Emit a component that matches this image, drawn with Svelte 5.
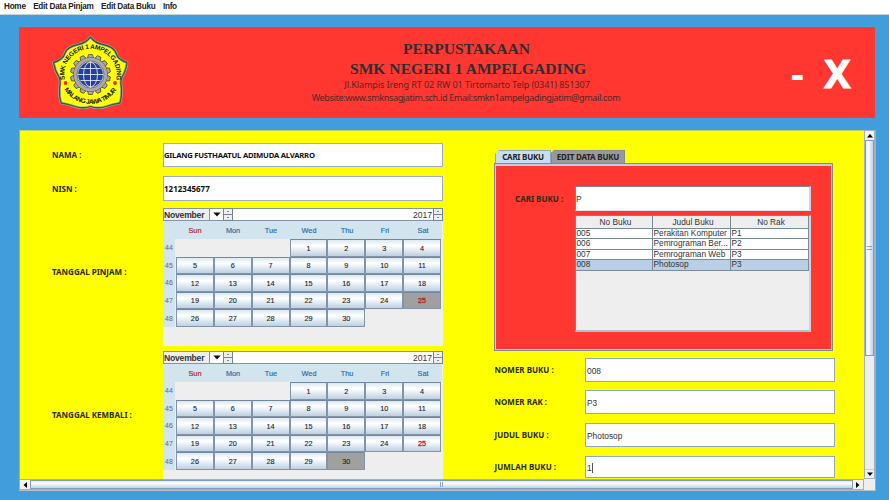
<script>
  const menu = ['Home', 'Edit Data Pinjam', 'Edit Data Buku', 'Info'];
  const days = ['Sun', 'Mon', 'Tue', 'Wed', 'Thu', 'Fri', 'Sat'];
  const weeks = [44, 45, 46, 47, 48];
  const cells = Array.from({ length: 35 }, (_, i) => (i >= 3 && i <= 32 ? i - 2 : null));
  const calendars = [
    { label: 'TANGGAL PINJAM :', selected: 25 },
    { label: 'TANGGAL KEMBALI :', selected: 30 }
  ];
  const books = [
    ['005', 'Perakitan Komputer', 'P1'],
    ['006', 'Pemrograman Ber...', 'P2'],
    ['007', 'Pemrograman Web', 'P3'],
    ['008', 'Photosop', 'P3']
  ];
  const teeth = Array.from({ length: 14 }, (_, i) => i * (360 / 14));
  const petals =
    'M45.4 7Q50 13 58 14.500Q69 17 71 23Q73 30 82 32.500Q81 41 77 47Q75 51 76.500 58Q77 66 75 73Q68 74 61 76.500Q53 79 45.400 76.500Q38 79 30 76.500Q23 74 16 73Q14 66 14.500 58Q16 51 14 47Q10 41 8.500 32.500Q18 30 20 23Q22 17 33 14.500Q41 13 45.400 7Z';
</script>

{#snippet spinner()}
  <span class="spinner"><i></i><i></i></span>
{/snippet}

{#snippet calendar(selected)}
  <div class="calendar">
    <div class="cal-top">
      <span class="month">November</span>
      <span class="drop"><svg width="8" height="5" viewBox="0 0 8 5"><path d="M0.3 0.5h7.4L4 4.6z" fill="#111" /></svg></span>
      {@render spinner()}
      <span class="year">2017</span>
      {@render spinner()}
    </div>
    <div class="cal-body">
      <div class="weeks">
        {#each weeks as w}<span>{w}</span>{/each}
      </div>
      <div class="month-grid">
        <div class="names">
          {#each days as d, i}<span class:sun={i === 0}>{d}</span>{/each}
        </div>
        <div class="cells">
          {#each cells as c}
            {#if c}
              <span class="day" class:today={c === 25} class:selected={c === selected}>{c}</span>
            {:else}
              <span></span>
            {/if}
          {/each}
        </div>
      </div>
    </div>
  </div>
{/snippet}

<div class="window">
  <nav>
    {#each menu as item}<span>{item}</span>{/each}
  </nav>

  <header>
    <svg class="logo" width="78" height="78" viewBox="7 4 78 78">
      <defs>
        <path id="arc-top" d="M21.1 54.500A26.200 26.200 0 1 1 69.900 54.500" />
        <path id="arc-bottom" d="M16.2 53A31 31 0 0 0 74.8 53" />
      </defs>
      <path d={petals} fill="#ffff08" stroke="#a5b1a0" stroke-width="2.600" stroke-linejoin="round" />
      <path d={petals} fill="none" stroke="#28603a" stroke-width="1.300" stroke-linejoin="round" />
      <g fill="#aaa9a6" stroke="#3b3926" stroke-width="0.700">
        {#each teeth as a}
          <path d="M42.300 28.500L43.600 24.500H47.400L48.700 28.500" transform="rotate({a} 45.500 44.500)" />
        {/each}
        <circle cx="45.500" cy="44.500" r="16.800" />
      </g>
      <circle cx="45.500" cy="44.500" r="16.700" fill="#aaa9a6" />
      <circle cx="45.500" cy="44.500" r="13.500" fill="#ddd" stroke="#555" stroke-width="0.700" />
      <circle cx="45.500" cy="44.500" r="12.400" fill="#23419a" />
      <g fill="none" stroke="#dce4f5" stroke-width="0.900">
        <path d="M45.500 32V57M33 44.500H58M35.500 38.500H55.500M35.500 50.500H55.500" />
        <ellipse cx="45.500" cy="44.500" rx="7" ry="12.400" />
      </g>
      <text class="ring"><textPath href="#arc-top" startOffset="5" textLength="92">SMK NEGERI 1 AMPELGADING</textPath></text>
      <text class="ring"><textPath href="#arc-bottom" startOffset="7" textLength="62">MALANG JAWA TIMUR</textPath></text>
      <circle cx="20.500" cy="53" r="1.900" fill="#f32626" />
      <circle cx="70" cy="53" r="1.900" fill="#f32626" />
    </svg>
    <div class="title">
      <h1>PERPUSTAKAAN</h1>
      <h1 class="school">SMK NEGERI 1 AMPELGADING</h1>
      <p class="address">Jl.Klampis Ireng RT 02 RW 01 Tirtomarto Telp (0341) 851307</p>
      <p class="contact">Website:www.smknsagjatim.sch.id Email:smkn1ampelgadingjatim@gmail.com</p>
    </div>
    <div class="controls"><span class="min">-</span><span class="close">X</span></div>
  </header>

  <main>
    <div class="content">
      <section class="left">
        <div class="row nama"><span class="label">NAMA :</span><div class="field bold"><span class="name">GILANG FUSTHAATUL ADIMUDA ALVARRO</span></div></div>
        <div class="row nisn"><span class="label">NISN :</span><div class="field bold"><span>1212345677</span></div></div>
        {#each calendars as c}
          <div class="row cal-row"><span class="label">{c.label}</span>{@render calendar(c.selected)}</div>
        {/each}
      </section>

      <section class="right">
        <div class="tabs">
          <span class="tab active">CARI BUKU</span>
          <span class="tab other">EDIT DATA BUKU</span>
        </div>
        <div class="panel">
          <span class="label search-label">CARI BUKU :</span>
          <div class="search">
            <div class="field query">P</div>
            <div class="table">
              <div class="tr th"><span>No Buku</span><span>Judul Buku</span><span>No Rak</span></div>
              {#each books as b, i}
                <div class="tr" class:picked={i === 3}>
                  {#each b as v}<span>{v}</span>{/each}
                </div>
              {/each}
            </div>
          </div>
        </div>
        <div class="form">
          <div class="row f1"><span class="label">NOMER BUKU :</span><div class="field">008</div></div>
          <div class="row f2"><span class="label">NOMER RAK :</span><div class="field">P3</div></div>
          <div class="row f3"><span class="label">JUDUL BUKU :</span><div class="field">Photosop</div></div>
          <div class="row f4"><span class="label">JUMLAH BUKU :</span><div class="field">1<b class="caret"></b></div></div>
        </div>
      </section>
    </div>
    <div class="vbar">
      <span class="btn"><svg width="6" height="4" viewBox="0 0 6 4"><path d="M3 0L6 3.500H0z" /></svg></span>
      <span class="thumb"><i></i></span>
      <span class="btn"><svg width="6" height="4" viewBox="0 0 6 4"><path d="M0 0.500H6L3 4z" /></svg></span>
    </div>
    <div class="hbar">
      <span class="btn"><svg width="4" height="6" viewBox="0 0 4 6"><path d="M4 0V6L0.500 3z" /></svg></span>
      <span class="thumb"><i></i></span>
      <span class="btn"><svg width="4" height="6" viewBox="0 0 4 6"><path d="M0 0V6L3.500 3z" /></svg></span>
    </div>
    <div class="corner"></div>
  </main>
</div>

<style>
  * { box-sizing: border-box; }
  :global(body) { margin: 0; }
  .window {
    width: 889px;
    height: 500px;
    overflow: hidden;
    background: #419ddb;
    font-family: "Liberation Sans", Arial, sans-serif;
    font-size: 8px;
    color: #333;
    white-space: nowrap;
  }
  nav {
    height: 15px;
    display: flex;
    gap: 7.500px;
    padding-left: 4px;
    background: #fff;
    border-bottom: 1px solid #c4d4df;
    font: bold 8.200px/14px "Liberation Sans", sans-serif;
    letter-spacing: -0.270px;
    color: #222;
  }
  header {
    margin: 12px 0 0 19px;
    width: 856px;
    height: 91px;
    display: grid;
    grid-template-columns: 278px 340px 1fr;
    background: #ff3730;
    border-bottom: 1px solid #d9443f;
  }
  .logo { margin: 7px 0 0 33px; }
  .ring { font: bold 6.500px "Liberation Sans", sans-serif; fill: #161600; }
  .title { text-align: center; color: #2e2e2e; }
  h1 { margin: 12px 0 0 -1px; font: bold 15.600px/20px "Liberation Serif", serif; }
  h1.school { margin: 0 0 0 2px; }
  p { margin: -1px 0 0; font: 9px/13px "Noto Sans", sans-serif; color: #4c2927; }
  .address { letter-spacing: -0.070px; }
  .contact { margin: 0; padding-right: 2px; letter-spacing: -0.330px; }
  .controls { display: flex; color: #fff; padding: 19px 0 0 154px; font: bold 40px/54px "Noto Sans", sans-serif; }
  .close { -webkit-text-stroke: 0.800px #fff; }
  .min { width: 33px; }
  main {
    margin: 12px 0 0 19px;
    width: 857px;
    height: 361px;
    display: grid;
    grid-template: 349px 11px / 845px 11px;
    border-bottom: 1px solid #b9bfc4;
    border-right: 1px solid #7cb8df;
  }
  .content { display: flex; overflow: hidden; background: #ff0; border-top: 1px solid #b8d06f; border-left: 1px solid #8fb77e; }
  .label, .tab { font: bold 8px/10px "Noto Sans", sans-serif; color: #2b2b10; }
  .left { width: 474px; padding: 12px 0 0 32px; flex: none; }
  .row { display: flex; align-items: center; }
  .left .row > :first-child { width: 111px; flex: none; }
  .nama { height: 24px; }
  .nisn { height: 25px; margin: 9px 0 7px; }
  .field {
    width: 280px;
    height: 100%;
    display: flex;
    align-items: center;
    background: #fff;
    border: 1px solid #9aabce;
    padding-top: 1px;
    font-size: 8.400px;
    color: #333;
  }
  .bold { font: bold 8px/10px "Noto Sans", sans-serif; color: #111; padding-top: 0; }
  .name { letter-spacing: -0.240px; font-size: 7.700px; }
  .left .cal-row { height: 137px; align-items: flex-start; margin-bottom: 6px; }
  .cal-row .label { padding-top: 59px; }
  .calendar { width: 280px; height: 138px; background: #eee; flex: none; }
  .cal-top { height: 13px; display: flex; background: #fff; border: 1px solid #8394aa; font: bold 8.600px/12px "Liberation Sans", sans-serif; color: #333; }
  .month { width: 45px; background: #eee; letter-spacing: -0.220px; }
  .drop { width: 14px; border-left: 1px solid #8394aa; display: grid; place-items: center; }
  .spinner { width: 10px; height: 13px; margin-top: -1px; display: grid; border: 1px solid #74859b; background: #eee; }
  .spinner i { width: 2px; height: 1px; background: #7c8795; place-self: center; }
  .spinner i:first-child { place-self: stretch; width: auto; height: auto; background: radial-gradient(circle at 50% 50%, #888 0 0.700px, #eee 1px); border-bottom: 1px solid #74859b; }
  .year { flex: 1; text-align: right; padding-right: 1px; font: 8.600px/13px "Liberation Sans", sans-serif; }
  .cal-top .spinner:last-child { margin-right: -1px; }
  .cal-body { display: grid; grid-template-columns: 12px 266px; }
  .weeks { height: 106px; padding-top: 18px; display: grid; grid-template-rows: repeat(5, 1fr); background: #d2e4ee; font-size: 7px; color: #666; text-align: center; align-items: center; }
  .names { height: 18px; display: grid; grid-template-columns: repeat(7, 1fr); background: #d2e4ee; color: #236da9; font-size: 7.300px; line-height: 19px; text-align: center; padding-left: 1px; width: 267px; -webkit-text-stroke: 0.150px; }
  .names .sun { color: #aa2020; }
  .cells { height: 88px; display: grid; grid-template: repeat(5, 1fr) / repeat(7, 1fr); padding-left: 1px; line-height: 1; }
  .day {
    display: grid;
    place-items: center;
    border: 1px solid #8394a7;
    border-top-color: #71879c;
    background: linear-gradient(#dce8f2, #fff 35%, #eaf1f8 55%, #bdd0e2);
    font-size: 7.300px;
    color: #222;
    -webkit-text-stroke: 0.100px;
    padding-top: 1px;
  }
  .today { color: #b71c24; -webkit-text-stroke: 0.300px; }
  .selected { background: #a0a0a0; }
  .right { width: 340px; padding-top: 19px; flex: none; }
  .tabs { height: 13px; display: flex; padding-left: 1px; }
  .tab { height: 13px; line-height: 12px; letter-spacing: -0.200px; color: #222; background: #999; text-align: center; border: 1px solid #858a96; border-bottom: 0; }
  .active { width: 56px; letter-spacing: -0.250px; background: #c8ddf2; border-color: #8fa9c8; clip-path: polygon(4px 0, 100% 0, 100% 100%, 0 100%, 0 4px); }
  .other { width: 74px; clip-path: polygon(3px 0, 100% 0, 100% 100%, 0 100%, 0 3px); }
  .panel { height: 188px; width: 339px; display: flex; background: #ff3730; border: 2px solid #b8cfe5; border-top-width: 3px; outline: 1px solid #7a8a99; outline-offset: -1px; padding: 20px 0 0 19px; }
  .search-label { width: 60px; padding-top: 8px; flex: none; }
  .query { width: 236px; height: 25px; border: 1px solid #74859b; border-right: 2px solid #c9d5df; border-bottom-color: #dbe4ee; }
  .table { width: 236px; height: 117px; margin-top: 4px; background: #eee; border: 1px solid #74859b; border-right: 2px solid #c9d5df; border-bottom: 2px solid #a8c3cc; font-size: 8.300px; }
  .tr { height: 10.400px; display: grid; grid-template-columns: 77px 78px 78px; line-height: 9.500px; background: #fff; border-bottom: 1px solid #7a8a99; }
  .tr span { border-right: 1px solid #7a8a99; overflow: hidden; padding-left: 0.500px; }
  .th { height: 13px; line-height: 13px; background: #eee; text-align: center; }
  .th span { padding-left: 3px; }
  .picked { background: #b8cfe5; }
  .form { padding-top: 7px; }
  .form .label { width: 91px; padding-left: 0.500px; flex: none; }
  .form .field { width: 250px; padding: 2px 0 0 1px; border-color: #8fa8c9; flex: none; }
  .f1 { height: 24px; }
  .f2 { height: 24px; margin-top: 8px; }
  .f3 { height: 24px; margin-top: 9px; }
  .f4 { height: 22px; margin-top: 9px; }
  .caret { width: 1px; height: 10px; background: #555; }
  .vbar, .hbar { display: flex; background: #eee; }
  .vbar { flex-direction: column; border: 1px solid #a3b0bd; }
  .btn { width: 9px; height: 9px; display: grid; place-items: center; background: #f1f1f1; flex: none; }
  .vbar .btn:last-child { margin-top: auto; border-top: 1px solid #ccc; }
  .thumb { display: grid; place-items: center; border: 1px solid #829cbb; }
  .vbar .thumb { height: 216px; background: linear-gradient(90deg, #dfe9f3, #fff 30%, #bed2e5); }
  .vbar .thumb i { width: 5px; height: 4px; border: solid #88a3c4; border-width: 1px 0; }
  .hbar { border: 1px solid #a3b0bd; }
  .hbar .thumb { flex: 1; background: linear-gradient(#dfe9f3, #fff 30%, #bed2e5); }
  .hbar .thumb i { width: 3px; height: 5px; border: solid #88a3c4; border-width: 0 1px; }
  .hbar .btn { width: 10px; }
  .corner { background: #eee; }
</style>
